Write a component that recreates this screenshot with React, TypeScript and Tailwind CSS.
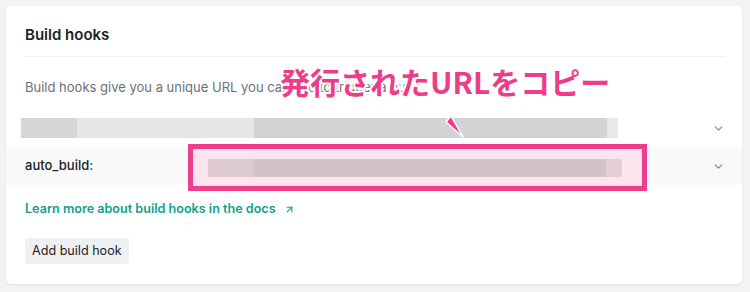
import { ChevronDown, ArrowUpRight } from 'lucide-react'

const ui = { fontFamily: 'Inter, "Noto Sans", sans-serif' }
const jp = { fontFamily: '"Noto Sans CJK JP", "Noto Sans", sans-serif' }

function App() {
  return (
    <div className="h-[292px] w-[750px] overflow-hidden bg-[#f2f3f5] pt-[6px] pl-[6px]" style={ui}>
      <div className="relative h-[278px] w-[736px] rounded-[5px] bg-white shadow-[0_1px_2px_rgba(0,0,0,0.08)]">
        <div className="ml-[19px] mr-[17px] border-b border-[#eef0f2] pt-[20px] pb-[12px]">
          <h2 className="text-[15px] leading-[18px] font-semibold text-[#1b1f23]">Build hooks</h2>
        </div>
        <p className="mt-[20px] pl-[19px] text-[13px] leading-[20px] text-[#6b7078]">
          Build hooks give you a unique URL you can use to trigger a build.
        </p>
        <div className="mt-[12px] flex h-[38px] items-center pr-[17px] pl-[15px]">
          <div className="flex h-[20px]">
            <div className="w-[56px] bg-[#d5d6d8]" />
            <div className="w-[177px] bg-[#e5e6e8]" />
            <div className="w-[353px] bg-[#d2d3d4]" />
            <div className="w-[11px] bg-[#e7e8ea]" />
          </div>
          <ChevronDown className="ml-auto text-[#8a8f97]" size={13} strokeWidth={2.5} />
        </div>
        <div className="flex h-[38px] items-center bg-[#f8f9fa] pr-[17px] pl-[19px]">
          <span className="text-[13px] font-medium text-[#1b1f23]">auto_build:</span>
          <ChevronDown className="ml-auto text-[#8a8f97]" size={13} strokeWidth={2.5} />
        </div>
        <a className="mt-[14px] ml-[19px] flex items-center gap-[8px] text-[12.6px] leading-[20px] font-semibold text-[#12a08b]">
          Learn more about build hooks in the docs
          <ArrowUpRight size={11} strokeWidth={2.5} />
        </a>
        <button className="mt-[19px] ml-[19px] flex h-[26px] items-center rounded-[3px] bg-[#eff0f1] px-[7px] text-[12.6px] text-[#1b1f23]">
          Add build hook
        </button>

        <div className="absolute top-[138px] left-[182px] h-[47px] w-[459px] border-[5px] border-[#ee3d8a] bg-[#fce5ed] pt-[10px] pl-[15px]">
          <div className="flex h-[18px]">
            <div className="w-[46px] bg-[#ddc9d0]" />
            <div className="w-[352px] bg-[#d4c2c9]" />
            <div className="w-[16px] bg-[#e2d0d6]" />
          </div>
        </div>

        <div
          className="absolute top-[60px] left-[274px] text-[30px] leading-[30px] font-bold whitespace-nowrap text-[#ec3d88] [-webkit-text-stroke:4px_white] [paint-order:stroke_fill]"
          style={jp}
        >
          発行されたURLをコピー
        </div>
        <svg className="absolute top-[104px] left-[438px]" width="28" height="30" viewBox="0 0 28 30">
          <polygon points="2,12 7,6 19,27" fill="#ec3d88" stroke="white" strokeWidth="1.5" strokeLinejoin="round" />
        </svg>
      </div>
    </div>
  )
}

export default App
